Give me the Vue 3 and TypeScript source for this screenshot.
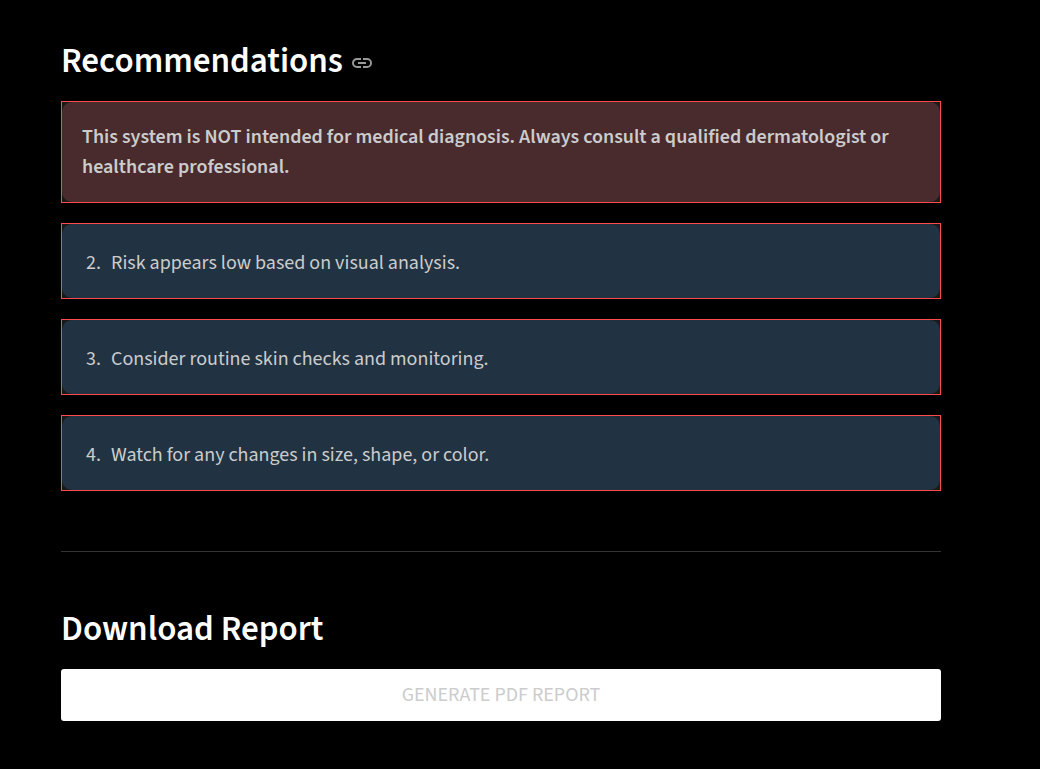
<script setup lang="ts">
interface Recommendation {
  id: number
  text: string
}

const recommendations: Recommendation[] = [
  { id: 2, text: 'Risk appears low based on visual analysis.' },
  { id: 3, text: 'Consider routine skin checks and monitoring.' },
  { id: 4, text: 'Watch for any changes in size, shape, or color.' },
]
</script>

<template>
  <main class="page">
    <section id="recommendations">
      <h2 class="heading">
        Recommendations
        <a class="anchor" href="#recommendations" aria-label="Link to Recommendations">
          <svg viewBox="0 0 24 24" width="24" height="24" fill="currentColor" aria-hidden="true">
            <path d="M3.9 12c0-1.71 1.39-3.1 3.1-3.1h4V7H7a5 5 0 0 0 0 10h4v-1.9H7c-1.71 0-3.1-1.39-3.1-3.1zM8 13h8v-2H8v2zm9-6h-4v1.9h4a3.1 3.1 0 0 1 0 6.2h-4V17h4a5 5 0 0 0 0-10z" />
          </svg>
        </a>
      </h2>
      <div class="alerts">
        <div class="frame">
          <p class="alert warning">
            This system is NOT intended for medical diagnosis. Always consult a qualified dermatologist or healthcare professional.
          </p>
        </div>
        <div v-for="item in recommendations" :key="item.id" class="frame">
          <ol class="alert info" :start="item.id">
            <li>{{ item.text }}</li>
          </ol>
        </div>
      </div>
    </section>
    <hr class="divider" />
    <section>
      <h2 class="heading">Download Report</h2>
      <button class="generate" type="button">GENERATE PDF REPORT</button>
    </section>
  </main>
</template>

<style>
body {
  margin: 0;
  background: #000;
}
</style>

<style scoped>
.page {
  padding: 40px 99px 48px 61px;
  color: #fff;
  font-family: "Source Sans 3", "Source Sans Pro", "Noto Sans CJK SC", "Noto Sans", sans-serif;
  font-size: 20px;
  line-height: 30px;
}
.heading {
  display: flex;
  align-items: center;
  gap: 7px;
  margin: 0 0 19px;
  font-size: 35px;
  font-weight: 600;
  line-height: 42px;
}
.anchor {
  display: flex;
  padding-top: 3px;
  color: #999;
}
.alerts {
  display: grid;
  gap: 20px;
}
.frame {
  border: 1px solid #ff4b4b;
  background: #1a1a1a;
}
.alert {
  margin: 0;
  padding: 20px;
  border-radius: 10px;
  color: #ccc;
}
.warning {
  background: #492b2d;
  font-weight: 600;
}
.info {
  padding: 24px 20px 20px 43px;
  background: #213343;
}
.info li {
  padding-left: 6px;
}
.divider {
  margin: 60px 0 56px;
  border: 0;
  border-top: 1px solid #333;
}
.generate {
  width: 100%;
  padding: 11px 20px;
  border: 0;
  border-radius: 3px;
  background: #fff;
  color: #ccc;
  font: inherit;
}
</style>
